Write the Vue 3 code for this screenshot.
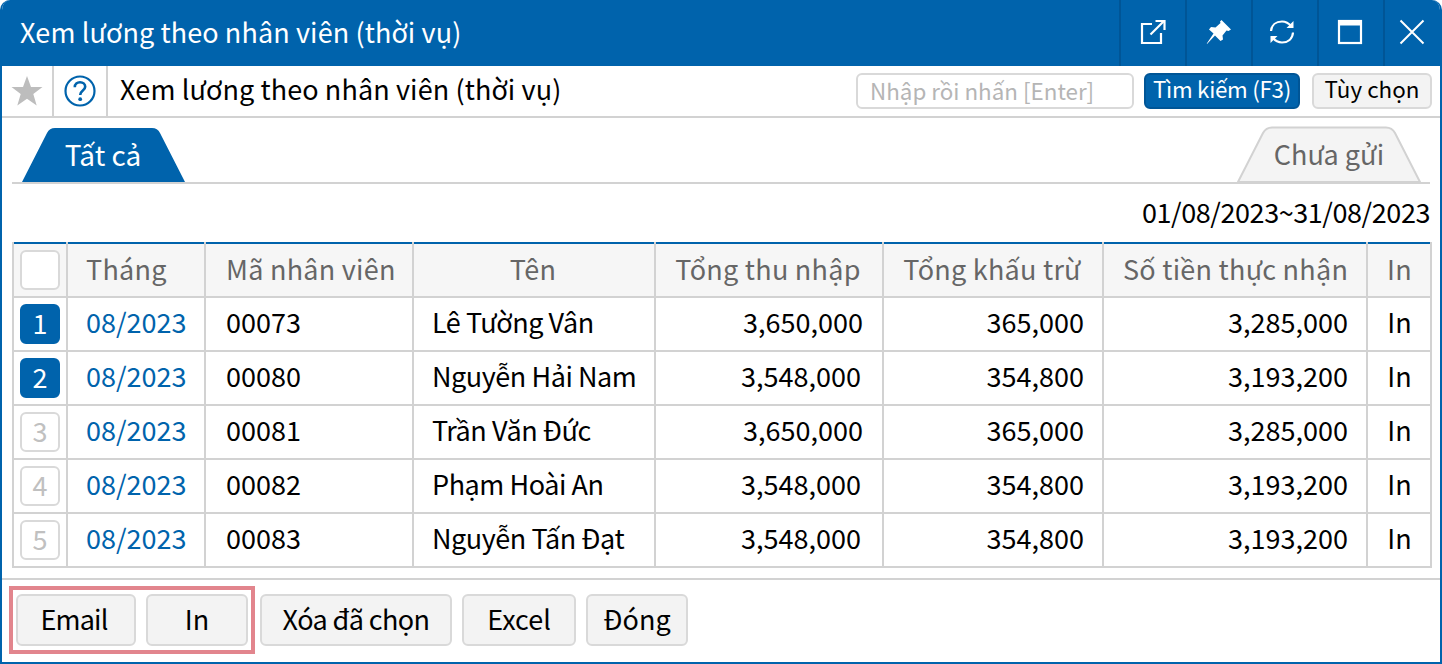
<template>
  <div class="window">
    <header class="title-bar">
      <h1 class="title">Xem lương theo nhân viên (thời vụ)</h1>
      <div class="win-actions">
        <button class="win-btn">
          <svg width="26" height="26" viewBox="0 0 26 26" fill="none" stroke="#fff" stroke-width="2.2">
            <path d="M12 5H2V24H21V14" />
            <path d="M10.500 15.500 24 2" />
            <path d="M15.500 2H24.500V11" />
          </svg>
        </button>
        <button class="win-btn">
          <svg width="26" height="26" viewBox="0 0 26 26" fill="#fff">
            <path d="M15.500 1 25 10.500 22.500 12 20.500 11.500 16.500 16.500 17 20.500 14.500 22 9 16.500 1 25 0.800 24.500 7.500 14.500 3 10.500 5 8 9.500 8.500 14.500 4 14 2.500Z" />
          </svg>
        </button>
        <button class="win-btn refresh">
          <svg width="26" height="26" viewBox="0 0 26 26" fill="none" stroke="#fff" stroke-width="2.2">
            <path d="M2 12C2.500 6 7 2.500 13 2.500 17 2.500 20 4.500 22.500 7.500" />
            <path d="M24 13.500C23.500 20 19 23.500 13 23.500 9 23.500 6 21.500 3.500 18.500" />
            <path d="M24.500 2V9H17.500Z" fill="#fff" stroke="none" />
            <path d="M1.500 24V17H8.500Z" fill="#fff" stroke="none" />
          </svg>
        </button>
        <button class="win-btn maximize">
          <svg width="26" height="26" viewBox="0 0 26 26" fill="none" stroke="#fff" stroke-width="2.2">
            <rect x="2" y="2" width="22" height="22" />
            <rect x="1" y="1" width="24" height="5.500" fill="#fff" stroke="none" />
          </svg>
        </button>
        <button class="win-btn last">
          <svg width="26" height="26" viewBox="0 0 26 26" fill="none" stroke="#fff" stroke-width="2">
            <path d="M1.500 1.500 24.500 24.500M24.500 1.500 1.500 24.500" />
          </svg>
        </button>
      </div>
    </header>

    <div class="toolbar">
      <div class="tool-cell star">
        <svg width="32" height="32" viewBox="0 0 32 32" fill="#bdbdbd">
          <path d="M16 1 20 12H31.500L22.300 19 25.700 30.500 16 23.700 6.300 30.500 9.700 19 0.500 12H12Z" />
        </svg>
      </div>
      <div class="tool-cell help">
        <svg width="32" height="32" viewBox="0 0 32 32" fill="none">
          <circle cx="16" cy="16" r="14.500" stroke="#0063ac" stroke-width="2.200" />
          <path d="M10.800 12.300C10.800 9 13.200 7.300 16 7.300 19 7.300 21.200 9 21.200 11.800 21.200 15.600 16.200 15.600 16.200 20" stroke="#0063ac" stroke-width="2.600" />
          <circle cx="16.200" cy="24.200" r="1.900" fill="#0063ac" />
        </svg>
      </div>
      <div class="page-title">Xem lương theo nhân viên (thời vụ)</div>
      <input class="search" type="text" placeholder="Nhập rồi nhấn [Enter]" />
      <button class="btn-primary">Tìm kiếm (F3)</button>
      <button class="btn-small">Tùy chọn</button>
    </div>

    <div class="tabs">
      <div class="tab tab-active">
        <svg class="tab-shape" width="164" height="54" viewBox="0 0 164 54">
          <path d="M0 54 25 5Q27.500 0 33 0H130Q135.500 0 138 5L163 54Z" fill="#0063ac" />
        </svg>
        <span class="tab-label">Tất cả</span>
      </div>
      <div class="tab tab-idle">
        <svg class="tab-shape" width="184" height="56" viewBox="0 0 184 56">
          <path d="M1 56 26 7Q29 1.500 35 1.500H149Q155 1.500 158 7L183 56Z" fill="#f4f4f4" stroke="#d2d2d2" stroke-width="2" />
        </svg>
        <span class="tab-label">Chưa gửi</span>
      </div>
    </div>

    <div class="date-range">01/08/2023~31/08/2023</div>

    <table class="grid">
      <colgroup>
        <col v-for="w in colWidths" :key="w.id" :style="{ width: w.px + 'px' }" />
      </colgroup>
      <thead>
        <tr>
          <th class="c-check"><span class="check-box"></span></th>
          <th class="left month">Tháng</th>
          <th class="left code">Mã nhân viên</th>
          <th>Tên</th>
          <th>Tổng thu nhập</th>
          <th>Tổng khấu trừ</th>
          <th>Số tiền thực nhận</th>
          <th>In</th>
        </tr>
      </thead>
      <tbody>
        <tr v-for="(r, i) in rows" :key="r.code">
          <td class="c-check">
            <span class="check-box num" :class="{ on: i < 2 }">{{ i + 1 }}</span>
          </td>
          <td class="link month">08/2023</td>
          <td class="code">{{ r.code }}</td>
          <td class="name">{{ r.name }}</td>
          <td class="money income" :class="{ nudge: r.income === '3,548,000' }">{{ r.income }}</td>
          <td class="money">{{ r.deduct }}</td>
          <td class="money">{{ r.net }}</td>
          <td class="center">In</td>
        </tr>
      </tbody>
    </table>

    <footer class="footer">
      <div class="highlight">
        <button class="btn email">Email</button>
        <button class="btn print">In</button>
      </div>
      <button class="btn del">Xóa đã chọn</button>
      <button class="btn excel">Excel</button>
      <button class="btn close">Đóng</button>
    </footer>
  </div>
</template>

<script setup>
const colWidths = [
  { id: "check", px: 54 },
  { id: "month", px: 138 },
  { id: "code", px: 208 },
  { id: "name", px: 242 },
  { id: "income", px: 228 },
  { id: "deduct", px: 220 },
  { id: "net", px: 264 },
  { id: "print", px: 64 },
];

const rows = [
  { code: "00073", name: "Lê Tường Vân", income: "3,650,000", deduct: "365,000", net: "3,285,000" },
  { code: "00080", name: "Nguyễn Hải Nam", income: "3,548,000", deduct: "354,800", net: "3,193,200" },
  { code: "00081", name: "Trần Văn Đức", income: "3,650,000", deduct: "365,000", net: "3,285,000" },
  { code: "00082", name: "Phạm Hoài An", income: "3,548,000", deduct: "354,800", net: "3,193,200" },
  { code: "00083", name: "Nguyễn Tấn Đạt", income: "3,548,000", deduct: "354,800", net: "3,193,200" },
];
</script>

<style>
html,
body {
  margin: 0;
  background: #fff;
}
</style>

<style scoped>
.window {
  box-sizing: border-box;
  width: 1442px;
  height: 664px;
  border: 2px solid #0063ac;
  border-top: 0;
  border-radius: 10px 10px 0 0;
  font-family: "Noto Sans CJK KR", "Noto Sans", sans-serif;
  font-size: 27px;
  color: #000;
  background: #fff;
  overflow: hidden;
}

button {
  font-family: inherit;
  cursor: pointer;
}

.title-bar {
  height: 66px;
  margin: 0 -2px;
  background: #0063ac;
  display: flex;
  align-items: center;
  justify-content: space-between;
  padding-left: 20px;
}

.title {
  margin: 0 0 3px;
  font-size: 27px;
  font-weight: 400;
  color: #fff;
  letter-spacing: 0.1px;
}

.win-actions {
  display: flex;
  height: 100%;
}

.win-btn {
  box-sizing: border-box;
  width: 66px;
  height: 100%;
  padding: 0 0 2px;
  background: none;
  border: 0;
  border-left: 2px solid #005596;
  display: flex;
  align-items: center;
  justify-content: center;
}

.win-btn.refresh {
  padding-right: 6px;
}

.win-btn.maximize {
  padding-right: 2px;
}

.win-btn.last {
  width: 59px;
  padding-right: 4px;
}

.toolbar {
  height: 52px;
  box-sizing: border-box;
  border-bottom: 2px solid #d2d2d2;
  display: flex;
  align-items: center;
  padding-right: 8px;
}

.tool-cell {
  box-sizing: border-box;
  height: 100%;
  border-right: 2px solid #d2d2d2;
  display: flex;
  align-items: center;
  justify-content: center;
}

.tool-cell.star {
  width: 52px;
}

.tool-cell.help {
  width: 54px;
}

.page-title {
  flex: 1;
  padding-left: 12px;
  padding-bottom: 5px;
  letter-spacing: 0.1px;
}

.search {
  box-sizing: border-box;
  width: 278px;
  height: 36px;
  border: 2px solid #d9d9d9;
  border-radius: 6px;
  padding: 0 12px 3px;
  font-family: inherit;
  font-size: 22.4px;
  outline: none;
}

.search::placeholder {
  color: #b5b5b5;
}

.btn-primary,
.btn-small {
  box-sizing: border-box;
  height: 36px;
  padding: 0 0 5px;
  border-radius: 6px;
  font-size: 22.4px;
  line-height: 1;
}

.btn-primary {
  width: 156px;
  margin-left: 10px;
  background: #0063ac;
  border: 2px solid #005596;
  color: #fff;
  letter-spacing: -0.3px;
}

.btn-small {
  width: 120px;
  margin-left: 12px;
  background: #f3f3f3;
  border: 2px solid #d9d9d9;
  color: #000;
}

.tabs {
  height: 66px;
  margin: 0 10px;
  border-bottom: 2px solid #d2d2d2;
  display: flex;
  justify-content: space-between;
  align-items: flex-end;
  box-sizing: border-box;
  padding: 0 9px 0 10px;
}

.tab {
  position: relative;
  height: 54px;
  display: flex;
  align-items: center;
  justify-content: center;
  padding-bottom: 2px;
  box-sizing: border-box;
}

.tab-active {
  width: 164px;
  color: #fff;
  font-size: 28px;
}

.tab-idle {
  width: 184px;
  color: #666;
  height: 56px;
}

.tab-shape {
  position: absolute;
  left: 0;
  top: 0;
}

.tab-label {
  position: relative;
  font-weight: 400;
}

.tab-active .tab-label {
  right: 1px;
}

.date-range {
  height: 58px;
  padding-right: 10px;
  box-sizing: border-box;
  text-align: right;
  line-height: 56px;
  letter-spacing: -0.43px;
}

.grid {
  table-layout: fixed;
  border-collapse: collapse;
  width: 1418px;
  margin-left: 10px;
  border-top: 2px solid #0063ac;
}

.grid th,
.grid td {
  box-sizing: border-box;
  height: 54px;
  border: 2px solid #d2d2d2;
  padding: 0 18px 5px 19px;
  font-weight: 400;
  white-space: nowrap;
  overflow: hidden;
}

.grid thead tr:first-child th {
  border-top: 0;
}

.grid th {
  padding: 0 21px 3px 19px;
  background: #f6f6f6;
  color: #666;
  font-weight: 400;
  letter-spacing: 0.25px;
  text-align: center;
}

.grid th.left {
  text-align: left;
}

.grid .month {
  padding-left: 18px;
}

.grid .code {
  padding-left: 20px;
}

.grid .name {
  padding-left: 18px;
  letter-spacing: -0.45px;
}

.grid .c-check {
  padding: 0 0 0 6px;
  text-align: left;
}

.check-box {
  display: block;
  box-sizing: border-box;
  width: 40px;
  height: 40px;
  border: 2px solid #d9d9d9;
  border-radius: 6px;
  background: #fff;
}

.num {
  text-align: center;
  line-height: 34px;
  color: #c0c0c0;
}

.num.on {
  background: #0063ac;
  border-color: #0063ac;
  color: #fff;
}

.link {
  color: #0063ac;
}

.money {
  text-align: right;
}

.grid .money.income {
  padding-right: 19px;
}

.grid .money.income.nudge {
  padding-right: 21px;
}

.center {
  text-align: center;
}

.footer {
  margin-top: 10px;
  border-top: 2px solid #d2d2d2;
  display: flex;
  align-items: center;
  padding: 6px 0 0 7px;
}

.highlight {
  display: flex;
  gap: 10px;
  box-sizing: border-box;
  width: 246px;
  height: 68px;
  padding: 4px 3px;
  border: 4px solid #e2858d;
  align-items: center;
}

.btn {
  box-sizing: border-box;
  height: 52px;
  padding: 0 0 3px;
  background: #f3f3f3;
  border: 2px solid #d9d9d9;
  border-radius: 6px;
  font-size: 27px;
  color: #000;
}

.email {
  width: 120px;
  letter-spacing: -0.8px;
  padding-right: 4px;
}

.print {
  width: 102px;
}

.del {
  width: 192px;
  margin-left: 5px;
  letter-spacing: -0.6px;
}

.excel {
  width: 114px;
  margin-left: 10px;
}

.close {
  width: 102px;
  margin-left: 10px;
}
</style>
